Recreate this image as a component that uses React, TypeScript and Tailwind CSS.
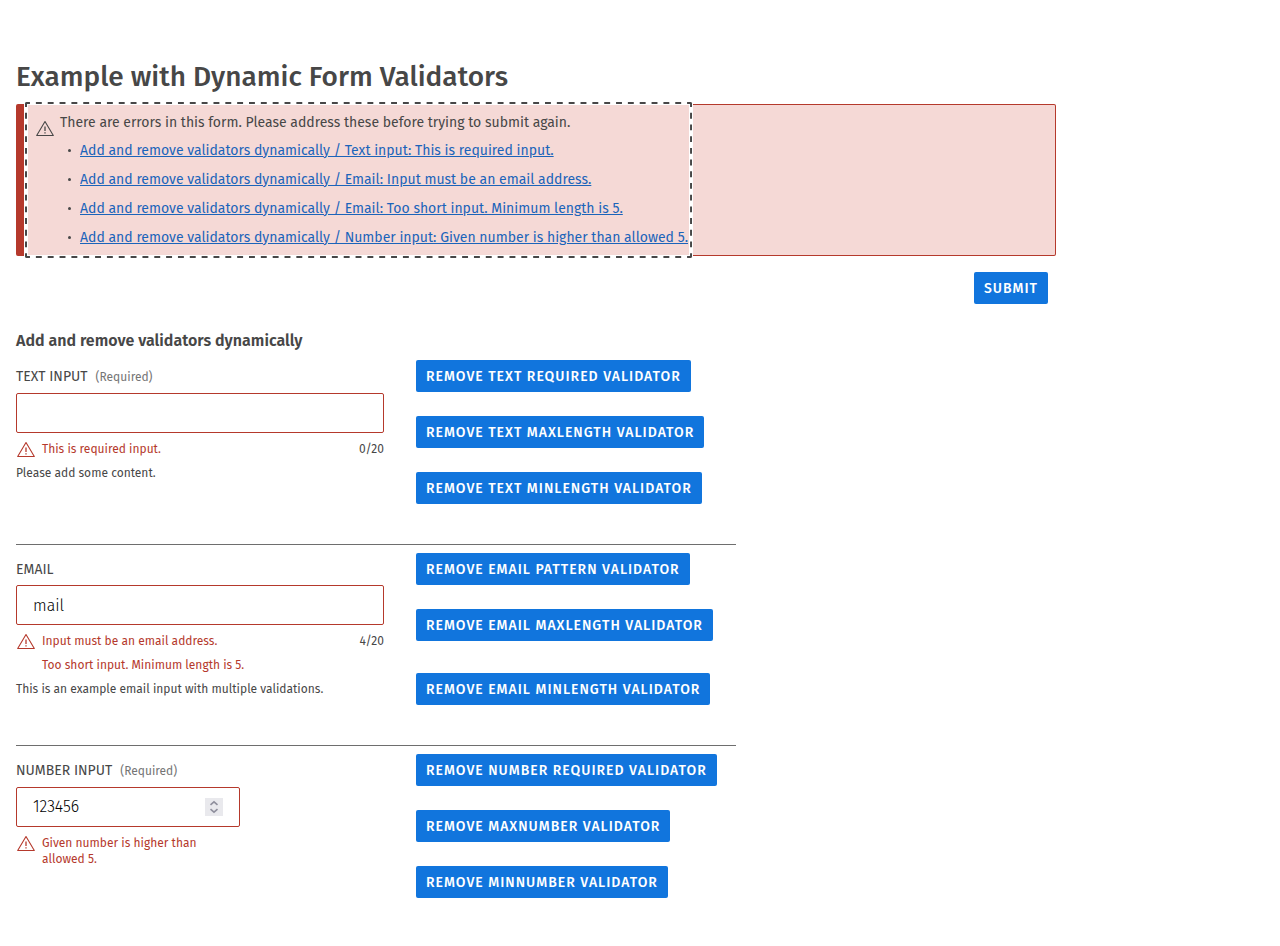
import { ReactNode } from 'react';

function WarningIcon({ className }: { className: string }) {
  return (
    <svg className={className} width="20" height="20" viewBox="0 0 20 20" fill="none" stroke="currentColor" strokeWidth="1.1" strokeLinejoin="round" aria-hidden="true">
      <path d="M10 1.5 L18.3 15.5 H1.7 Z" />
      <path d="M10 6.5 V11" strokeWidth="1.3" />
      <path d="M10 12.3 V13.6" strokeWidth="1.3" />
    </svg>
  );
}

/* Dashed focus ring; the lines sit on the edge, so half of each stroke is clipped away. */
function FocusRing() {
  return (
    <svg
      className="pointer-events-none absolute -top-[3px] -left-[3px] h-[calc(100%+6px)] w-[calc(100%+6px)] overflow-hidden rounded-xs"
      stroke="#474747"
      strokeWidth="4"
      aria-hidden="true"
    >
      <g strokeDasharray="5.92 5.92" strokeDashoffset="0.96">
        <line x1="0" y1="0" x2="100%" y2="0" />
        <line x1="0" y1="100%" x2="100%" y2="100%" />
      </g>
      <g strokeDasharray="5.85 5.85" strokeDashoffset="0.92">
        <line x1="0" y1="0" x2="0" y2="100%" />
        <line x1="100%" y1="0" x2="100%" y2="100%" />
      </g>
    </svg>
  );
}

const buttonClass =
  'flex h-8 items-center rounded-xs bg-[#1175dd] px-2.5 pt-0.5 text-sm font-medium tracking-[1px] whitespace-nowrap text-white uppercase';

const errorLinks = [
  { href: '#text', label: 'Add and remove validators dynamically / Text input: This is required input.' },
  { href: '#email', label: 'Add and remove validators dynamically / Email: Input must be an email address.' },
  { href: '#email', label: 'Add and remove validators dynamically / Email: Too short input. Minimum length is 5.' },
  { href: '#number', label: 'Add and remove validators dynamically / Number input: Given number is higher than allowed 5.' },
];

function ErrorSummary() {
  return (
    <div role="alert" className="flex rounded-xs border border-l-8 border-[#b5392c] bg-[#f5d9d6] pl-1">
      <div className="relative bg-[#f5d9d6] pt-2 pr-px pb-[3px] pl-[7px] shadow-[0_0_0_4px_#fff]">
        <div className="flex gap-[5px]">
          <WarningIcon className="mt-[7px] shrink-0 self-start" />
          <div>
            <p className="text-sm leading-5">There are errors in this form. Please address these before trying to submit again.</p>
            <ul className="pt-[3px] pl-2">
              {errorLinks.map((link) => (
                <li key={link.label} className="flex h-[29px] items-center gap-[9px]">
                  <span className="size-[3px] shrink-0 rounded-full bg-[#474747]" />
                  <a href={link.href} className="text-sm leading-5 text-[#1b64ba] underline">
                    {link.label}
                  </a>
                </li>
              ))}
            </ul>
          </div>
        </div>
        <FocusRing />
      </div>
    </div>
  );
}

type FieldProps = {
  id: string;
  label: string;
  required?: boolean;
  narrow?: boolean;
  errors: string[];
  counter?: string;
  help?: string;
  children: ReactNode;
};

function Field({ id, label, required, narrow, errors, counter, help, children }: FieldProps) {
  return (
    <div className={narrow ? 'w-56' : 'w-full'}>
      <label htmlFor={id} className={required ? 'flex h-[33px] items-center gap-2 pt-px text-sm' : 'flex h-8 items-center pt-0.5 text-sm'}>
        <span className="uppercase">{label}</span>
        {required && <span className="text-xs text-[#757575]">(Required)</span>}
      </label>
      {children}
      <div className="flex justify-between pt-2 text-xs leading-4">
        <div className="flex gap-1.5 text-[#b5392c]">
          <WarningIcon className="-mb-1 shrink-0" />
          <div className={narrow ? 'w-40 space-y-2' : 'space-y-2'}>
            {errors.map((error) => (
              <p key={error}>{error}</p>
            ))}
          </div>
        </div>
        {counter && <span>{counter}</span>}
      </div>
      {help && <p className="pt-2 text-xs leading-4">{help}</p>}
    </div>
  );
}

function Section({ field, buttons, divided, spaced }: { field: ReactNode; buttons: string[]; divided?: boolean; spaced?: boolean }) {
  return (
    <section className={divided ? 'grid grid-cols-[368px_1fr] gap-8 border-t border-[#6e6e6e] pt-2 pb-10' : 'grid grid-cols-[368px_1fr] gap-8 pb-10'}>
      {field}
      <div className={spaced ? 'flex flex-col items-start gap-6 [&>*:last-child]:mt-2' : 'flex flex-col items-start gap-6'}>
        {buttons.map((label) => (
          <button key={label} type="button" className={buttonClass}>
            {label}
          </button>
        ))}
      </div>
    </section>
  );
}

const inputClass =
  'block h-10 w-full rounded-xs border border-[#b5392c] bg-white px-4 text-base font-light text-black outline-none';

export default function App() {
  return (
    <main className="min-h-screen bg-white px-4 pt-14 font-['Fira_Sans','Roboto',sans-serif] text-[#474747]">
      <form className="max-w-[1040px]" noValidate>
        <h1 className="pb-1.5 text-[28px] leading-[42px] font-medium">Example with Dynamic Form Validators</h1>
        <ErrorSummary />
        <div className="flex justify-end pt-4 pr-2">
          <button type="button" className={buttonClass}>
            Submit
          </button>
        </div>
        <div className="max-w-[720px] pt-6">
          <h2 className="pb-1.5 text-base leading-[26px] font-semibold">Add and remove validators dynamically</h2>
          <Section
            buttons={['Remove text required validator', 'Remove text maxlength validator', 'Remove text minlength validator']}
            field={
              <Field id="text" label="Text input" required errors={['This is required input.']} counter="0/20" help="Please add some content.">
                <input id="text" type="text" className={inputClass} />
              </Field>
            }
          />
          <Section
            divided
            spaced
            buttons={['Remove email pattern validator', 'Remove email maxlength validator', 'Remove email minlength validator']}
            field={
              <Field
                id="email"
                label="Email"
                errors={['Input must be an email address.', 'Too short input. Minimum length is 5.']}
                counter="4/20"
                help="This is an example email input with multiple validations."
              >
                <input id="email" type="email" defaultValue="mail" className={inputClass} />
              </Field>
            }
          />
          <Section
            divided
            buttons={['Remove number required validator', 'Remove maxnumber validator', 'Remove minnumber validator']}
            field={
              <Field id="number" label="Number input" required narrow errors={['Given number is higher than allowed 5.']}>
                <div className="flex h-10 items-center rounded-xs border border-[#b5392c] bg-white px-4">
                  <input
                    id="number"
                    type="number"
                    defaultValue="123456"
                    className="min-w-0 flex-1 [appearance:textfield] bg-transparent text-base font-light text-black outline-none"
                  />
                  <svg width="18" height="18" viewBox="0 0 18 18" fill="none" stroke="#8f8f9d" strokeWidth="1.6" aria-hidden="true">
                    <rect width="18" height="18" fill="#e9e9ed" stroke="none" />
                    <path d="M5.5 6.8 L9 3.8 L12.5 6.8 M5.5 11.2 L9 14.2 L12.5 11.2" />
                  </svg>
                </div>
              </Field>
            }
          />
        </div>
      </form>
    </main>
  );
}
